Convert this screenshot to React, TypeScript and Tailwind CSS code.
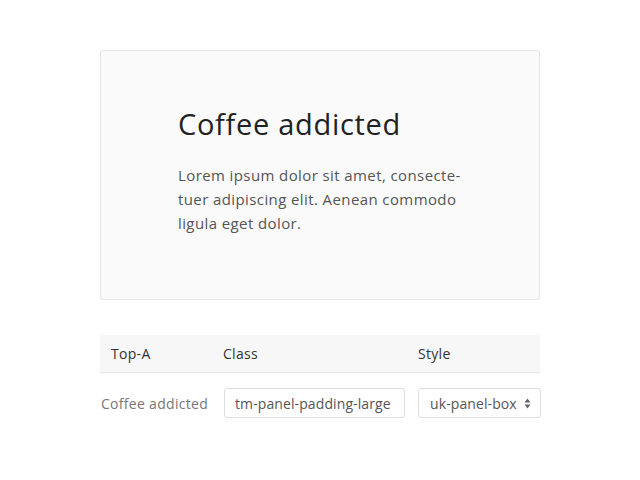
export default function App() {
  return (
    <div className="min-h-[480px] bg-white pt-[50px] font-['Open_Sans',sans-serif]">
      <div className="mx-auto w-[440px]">
        <div className="h-[250px] rounded-[3px] border border-[#e5e5e5] bg-[#fafafa] pl-[77px] pt-[54px]">
          <h1 className="text-[29px] leading-[38px] tracking-[0.7px] text-[#222]">Coffee addicted</h1>
          <p className="mt-[20px] whitespace-nowrap text-[15px] leading-6 tracking-[0.4px] text-[#555]">
            Lorem ipsum dolor sit amet, consecte-
            <br />
            tuer adipiscing elit. Aenean commodo
            <br />
            ligula eget dolor.
          </p>
        </div>

        <div className="mt-[35px] text-[14px] tracking-[0.3px]">
          <div className="flex h-[38px] items-center border-b border-[#e5e5e5] bg-[#f7f7f7] text-[#333]">
            <div className="w-[123px] pl-[11px]">Top-A</div>
            <div className="w-[195px]">Class</div>
            <div>Style</div>
          </div>
          <div className="flex h-[60px] items-center">
            <div className="w-[124px] shrink-0 pl-[1px] text-[#777]">Coffee addicted</div>
            <input
              readOnly
              value="tm-panel-padding-large"
              className="h-[30px] w-[181px] rounded-[3px] border border-[#ddd] bg-white px-[10px] text-[14px] tracking-[0.1px] text-[#555] outline-none"
            />
            <div className="ml-[13px] flex h-[30px] w-[123px] shrink-0 items-center justify-between rounded-[3px] border border-[#ddd] bg-white pl-[11px] pr-[9px] tracking-[0.1px] text-[#555]">
              <span>uk-panel-box</span>
              <svg width="7" height="11" viewBox="0 0 7 11" className="text-[#666]">
                <path d="M3.5 0.5L6.5 4.5H0.5Z" fill="currentColor" />
                <path d="M3.5 10.5L6.5 6.5H0.5Z" fill="currentColor" />
              </svg>
            </div>
          </div>
        </div>
      </div>
    </div>
  );
}
